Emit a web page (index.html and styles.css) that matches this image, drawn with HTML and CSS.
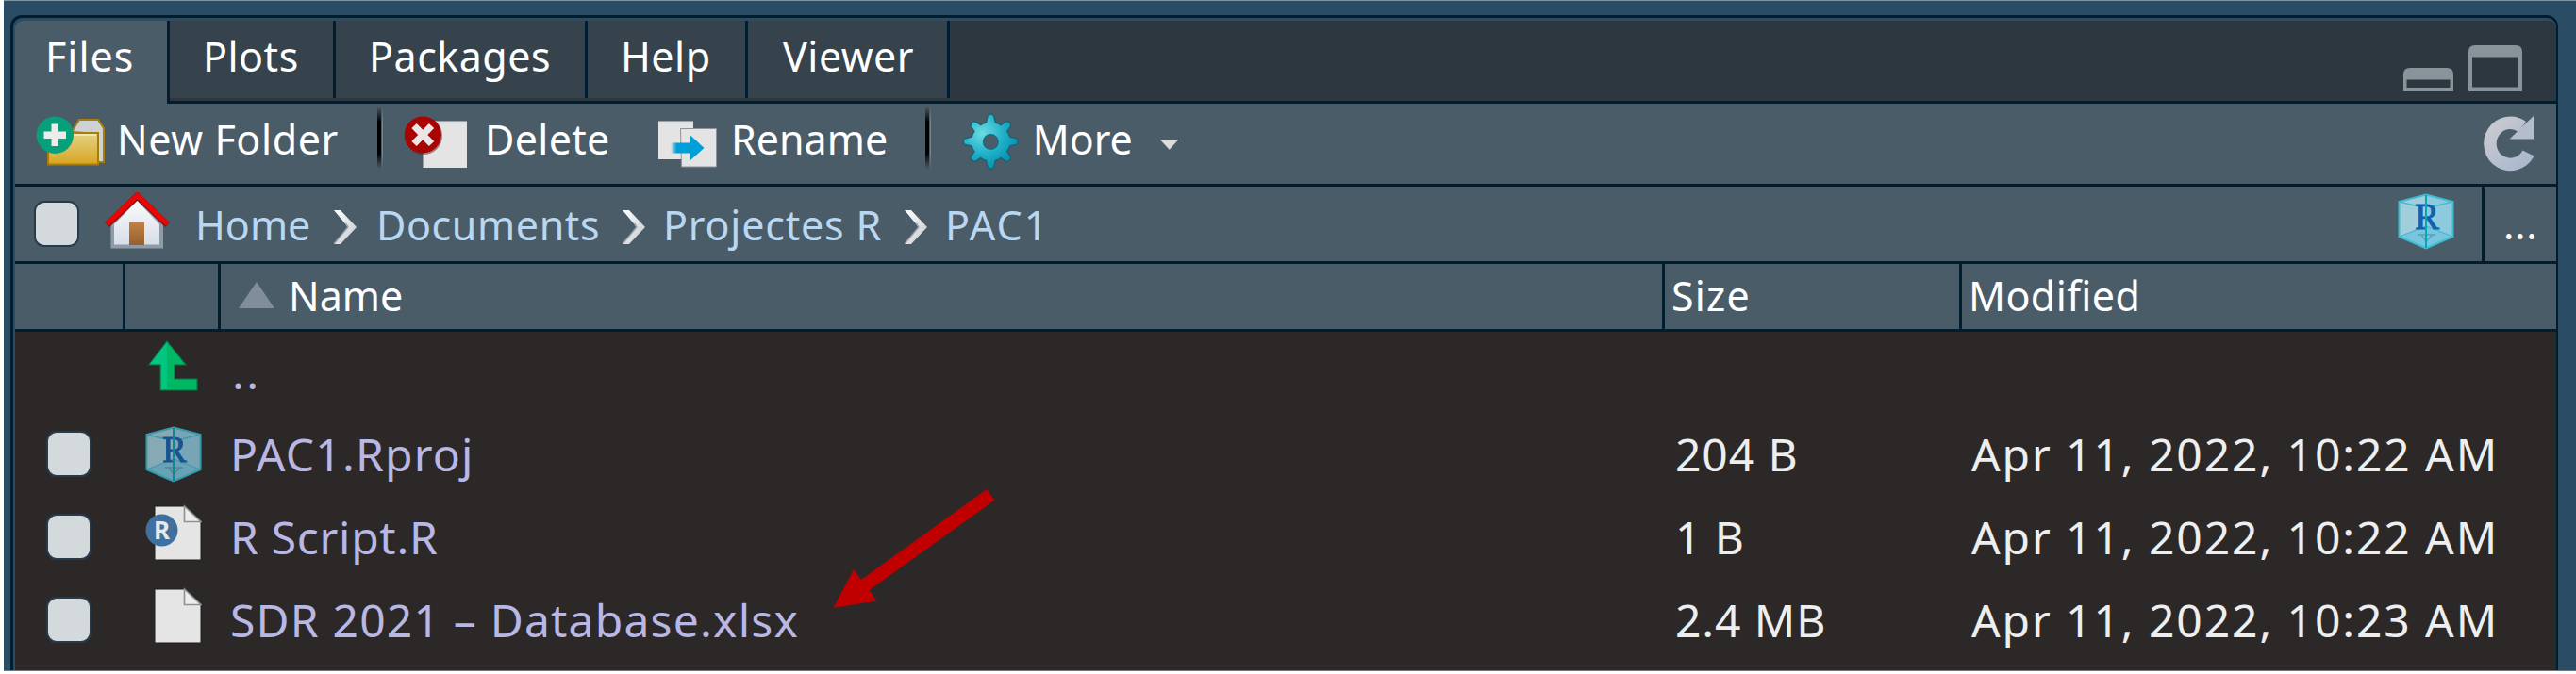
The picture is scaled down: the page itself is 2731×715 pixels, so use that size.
FILE: index.html
```
<!DOCTYPE html>
<html lang="en">
<head>
<meta charset="utf-8">
<title>Files</title>
<link rel="stylesheet" href="styles.css">
</head>
<body>
<svg class="defs" width="0" height="0">
  <defs>
    <linearGradient id="gold" x1="0" y1="0" x2="0" y2="1"><stop offset="0" stop-color="#e2d386"/><stop offset="1" stop-color="#d9a520"/></linearGradient>
    <radialGradient id="teal" cx=".35" cy=".35" r=".65"><stop offset="0" stop-color="#6cdbe2"/><stop offset=".6" stop-color="#1fafc8"/><stop offset="1" stop-color="#0893b5"/></radialGradient>
    <linearGradient id="wall" x1="0" y1="0" x2="0" y2="1"><stop offset="0" stop-color="#fafafa"/><stop offset="1" stop-color="#d8dde8"/></linearGradient>
    <linearGradient id="door" x1="0" y1="0" x2="0" y2="1"><stop offset="0" stop-color="#c18148"/><stop offset="1" stop-color="#94602f"/></linearGradient>
    <linearGradient id="silver" x1="0" y1="0" x2="1" y2="1"><stop offset="0" stop-color="#c9cacf"/><stop offset="1" stop-color="#a9b8cd"/></linearGradient>
    <linearGradient id="chev" x1="0" y1="0" x2="1" y2="1"><stop offset="0" stop-color="#ffffff"/><stop offset="1" stop-color="#c4c8cd"/></linearGradient>
    <linearGradient id="shaft" x1="0" y1="0" x2="1" y2="0"><stop offset="0" stop-color="#009fd8" stop-opacity="0"/><stop offset=".3" stop-color="#009fd8"/></linearGradient>
    <symbol id="chevron" viewBox="0 0 24 36"><path d="M0 0H7L24 18 7 36H0L15 18Z" fill="url(#chev)"/><path d="M0 36L15 18 12.500 14" fill="none" stroke="#9ea6ae" stroke-width="1.500"/></symbol>
    <symbol id="cube" viewBox="0 0 60 60">
      <path d="M30 1.500L58.500 9V46L30 58.500 1.500 46V9Z" fill="#8dc9df"/>
      <path d="M30 1.500V38L1.500 46V9Z" fill="#a0cedb"/>
      <path d="M1.500 46L30 35 58.500 46 30 58.500Z" fill="#78c5df"/>
      <path d="M30 1.500L58.500 9V46L30 58.500 1.500 46V9Z" fill="none" stroke="#3cbdd2" stroke-width="2"/>
      <path d="M1.500 46L30 35 58.500 46M1.500 9L22 14M58.500 9L38 14" fill="none" stroke="#43bccd" stroke-width="1.300"/>
      <path d="M21 44H40M25 44L30 51M30 51L37 44" fill="none" stroke="#5aa3b8" stroke-width="1.500"/>
      <text x="31" y="37.500" text-anchor="middle" class="cube-letter">R</text>
      <path d="M30 2V58" stroke="#00a7b4" stroke-width="2"/>
    </symbol>
    <symbol id="page" viewBox="0 0 60 60">
      <path d="M10 2H42L59 19V59H10Z" fill="#e5e5e5" stroke="#1f1d1d" stroke-width="1"/>
      <path d="M41.500 2V18.500H59Z" fill="#ececec" stroke="#8e9292" stroke-width="1.600"/>
    </symbol>
  </defs>
</svg>
<div class="frame">
  <div class="panel">
    <div class="tabbar">
      <div class="tab active t-files">Files</div>
      <div class="tab t-plots">Plots</div>
      <div class="tab t-packages">Packages</div>
      <div class="tab t-help">Help</div>
      <div class="tab t-viewer">Viewer</div>
      <svg class="winctl" width="130" height="52" viewBox="2547 47 130 52">
        <path d="M2549 97V79Q2549 72 2556 72H2595Q2602 72 2602 79V97ZM2552.500 84.500V93H2598.500V84.500Z" fill="#87949a" fill-rule="evenodd"/>
        <path d="M2618 97V55Q2618 48 2625 48H2668Q2675 48 2675 55V97ZM2622 60.500V92.500H2670.500V60.500Z" fill="#87949a" fill-rule="evenodd"/>
      </svg>
    </div>
    <div class="toolbar">
      <div class="tool b-new">
        <svg width="80" height="85" viewBox="36 110 80 85">
          <path d="M76 140L84 127H104L110 136V172H104V142Z" fill="#cfd2d2" stroke="#a87c0d" stroke-width="2"/>
          <path d="M51 141H104V174.500H51Z" fill="url(#gold)" stroke="#a87c0d" stroke-width="2"/>
          <path d="M54 143H102" stroke="#f3edc6" stroke-width="1.500"/>
          <circle cx="58.300" cy="143.300" r="19.700" fill="#07a07a"/>
          <path d="M54.500 131.500h7.500v8h8v7.500h-8v8h-7.500v-8h-8v-7.500h8Z" fill="#ececec"/>
        </svg>
        <span>New Folder</span>
      </div>
      <div class="divider"></div>
      <div class="tool b-delete">
        <svg width="80" height="85" viewBox="420 110 80 85">
          <path d="M448.500 128.500H495V178H448.500Z" fill="#e4e4e4"/>
          <circle cx="449" cy="144" r="20" fill="#5b2020" opacity=".5"/>
          <circle cx="448.300" cy="143" r="19.600" fill="#a90404"/>
          <path d="M439 133.500L457.500 152.500M457.500 133.500L439 152.500" stroke="#ebe5e5" stroke-width="7.500"/>
        </svg>
        <span>Delete</span>
      </div>
      <div class="tool b-rename">
        <svg width="80" height="85" viewBox="690 110 80 85">
          <path d="M698 128.500H735V169H698Z" fill="#e4e4e4"/>
          <path d="M721.500 136.500H759.500V177H722.500Z" fill="#e4e4e4" stroke="#8d9398" stroke-width="1"/>
          <path d="M711 151.500H732V162.500H711Z" fill="url(#shaft)"/>
          <path d="M732 143.500L746.500 157 732 170Z" fill="#009fd8"/>
        </svg>
        <span>Rename</span>
      </div>
      <div class="divider d2"></div>
      <div class="tool b-more">
        <svg width="80" height="85" viewBox="1011 110 80 85">
          <g transform="translate(1050.500 150)">
            <path d="M-5 -21L-3.500 -28Q0 -32 3.500 -28L5 -21Q8 -20.500 11 -18L17 -22Q22 -22 22 -17L18 -11Q20 -8 21 -5L28 -3.500Q32 0 28 3.500L21 5Q20 8 18 11L22 17Q22 22 17 22L11 18Q8 20.500 5 21L3.500 28Q0 32 -3.500 28L-5 21Q-8 20.500 -11 18L-17 22Q-22 22 -22 17L-18 11Q-20 8 -21 5L-28 3.500Q-32 0 -28 -3.500L-21 -5Q-20 -8 -18 -11L-22 -17Q-22 -22 -17 -22L-11 -18Q-8 -20.500 -5 -21Z" fill="url(#teal)" stroke="#23606f" stroke-width="1.500"/>
            <circle r="8" cy=".5" fill="#4b5b68" stroke="#176c80" stroke-width="1.500"/>
          </g>
        </svg>
        <span>More</span>
        <svg class="caret" width="20" height="11" viewBox="0 0 20 11"><path d="M0 0H20L10 11Z" fill="#dcdcdc"/></svg>
      </div>
      <svg class="refresh" width="60" height="85" viewBox="2630 110 60 85">
        <path d="M2681.500 162.500A21.500 22 0 1 1 2675 134.500" fill="none" stroke="url(#silver)" stroke-width="13.500"/>
        <path d="M2687 123V147.500H2661.500Z" fill="#b4bdcb"/>
      </svg>
    </div>
    <div class="crumbs">
      <span class="check c-all"></span>
      <svg class="house" width="70" height="62" viewBox="0 0 70 62">
        <path d="M6.500 34L34.500 8 62 34V59.500H6.500Z" fill="#8e9ca8"/>
        <path d="M10 34L34.500 9 58 34V55.500H10Z" fill="url(#wall)"/>
        <path d="M26 31.500H42V56H26Z" fill="url(#door)"/>
        <path d="M2.500 34.500L34.500 4 66.500 34.500" fill="none" stroke="#7d1515" stroke-width="7"/>
        <path d="M2.500 33.500L34.500 3.500 66.500 33.500" fill="none" stroke="#eb0505" stroke-width="5.500"/>
      </svg>
      <span class="crumb k-home">Home</span>
      <svg class="chevron" width="24" height="36"><use href="#chevron"/></svg>
      <span class="crumb k-docs">Documents</span>
      <svg class="chevron" width="24" height="36"><use href="#chevron"/></svg>
      <span class="crumb k-proj">Projectes R</span>
      <svg class="chevron" width="24" height="36"><use href="#chevron"/></svg>
      <span class="crumb k-pac">PAC1</span>
      <svg class="project" width="60" height="60"><use href="#cube"/></svg>
      <div class="browse">...</div>
    </div>
    <div class="grid head">
      <div class="hcell"></div>
      <div class="hcell"></div>
      <div class="hcell h-name"><svg width="38" height="28" viewBox="0 0 38 28"><path d="M19 0L38 28H0Z" fill="#828d9b"/></svg><span>Name</span></div>
      <div class="hcell h-size">Size</div>
      <div class="hcell h-mod">Modified</div>
    </div>
    <div class="rows">
      <div class="grid row">
        <div></div>
        <div class="icon"><svg class="up" width="60" height="60" viewBox="155 359 60 60">
          <path d="M178 362L198 387H186V402H210V414H171V387H159Z" fill="#00b864" stroke="#087443" stroke-width="1.200"/>
          <path d="M178 363V413H172V386H160Z" fill="#00c681"/>
        </svg></div>
        <div class="name n-up">..</div><div></div><div></div>
      </div>
      <div class="grid row">
        <div><span class="check"></span></div>
        <div class="icon"><svg class="dim" width="60" height="60"><use href="#cube"/></svg></div>
        <div class="name">PAC1.Rproj</div><div class="size">204 B</div><div class="date">Apr 11, 2022, 10:22 AM</div>
      </div>
      <div class="grid row">
        <div><span class="check"></span></div>
        <div class="icon file"><svg width="60" height="60" viewBox="0 0 60 60"><use href="#page"/><ellipse cx="17.500" cy="27.500" rx="17" ry="17" fill="#40709f"/><text x="17.500" y="37" text-anchor="middle" class="script-letter">R</text></svg></div>
        <div class="name n-script">R Script.R</div><div class="size s-one">1 B</div><div class="date">Apr 11, 2022, 10:22 AM</div>
      </div>
      <div class="grid row">
        <div><span class="check"></span></div>
        <div class="icon file"><svg width="60" height="60"><use href="#page"/></svg></div>
        <div class="name">SDR 2021 – Database.xlsx</div><div class="size">2.4 MB</div><div class="date">Apr 11, 2022, 10:23 AM</div>
      </div>
    </div>
  </div>
  <svg class="pointer" width="180" height="135" viewBox="880 515 180 135"><path d="M1046 519L1054.500 530.500 921.700 626 929.300 637.500 883.500 645 905 604 913 615Z" fill="#c00000"/></svg>
</div>
</body>
</html>
```
FILE: styles.css
```
* { box-sizing: border-box; }
body {
  margin: 0;
  background: #fff;
  font-family: "Noto Sans", "Open Sans", sans-serif;
  font-size: 43px;
  color: #fff;
  white-space: nowrap;
  overflow: hidden;
}
.defs { position: absolute; }
.frame {
  position: relative;
  height: 712px;
  margin-left: 4px;
  padding: 15px 0 0 7px;
  background: #2a4c64;
  border-top: 1px solid #8096a3;
  border-bottom: 1px solid #777;
  overflow: hidden;
}
.panel {
  width: 2701px;
  height: 706px;
  padding: 3px 0 0 2px;
  border: 3px solid #001e30;
  border-right-width: 2px;
  border-radius: 12px 12px 0 0;
  overflow: hidden;
}
.tabbar {
  display: flex;
  height: 88px;
  background: #2c3740;
  border-bottom: 3px solid #001e30;
  border-radius: 8px 8px 0 0;
}
.tab {
  height: 82px;
  line-height: 76px;
  letter-spacing: .5px;
  background: #37434c;
  border-right: 3px solid #001e30;
}
.tab.active { height: 88px; background: #4b5c69; border-top-left-radius: 8px; }
.t-files { width: 164px; padding-left: 32px; letter-spacing: 1px; }
.t-plots { width: 176px; padding-left: 35px; }
.t-packages { width: 267px; padding-left: 35px; }
.t-help { width: 170px; padding-left: 35px; }
.t-viewer { width: 214px; padding-left: 37px; }
.winctl { margin: 25px 34px 0 auto; }
.toolbar {
  display: flex;
  height: 88px;
  background: #4b5c69;
  border-bottom: 3px solid #001e30;
  line-height: 75px;
}
.tool { display: flex; flex: none; }
.tool span { margin-left: 7px; }
.b-new { width: 384px; padding-left: 20px; }
.b-new span { margin-left: 8px; letter-spacing: .6px; }
.b-delete { width: 284px; padding-left: 14px; }
.b-delete span { margin-left: 14px; letter-spacing: .3px; }
.b-rename { width: 291px; }
.b-rename span { margin-left: 5px; }
.b-more { width: 262px; padding-left: 25px; }
.b-more span { width: 139px; margin-left: 5px; }
.caret { margin-top: 38px; }
.divider {
  flex: none;
  width: 6px;
  height: 66px;
  margin-top: 3px;
  background: linear-gradient(90deg, #000 0 4px, #4b5c69 4px 5px, #788690 5px);
  mask-image: linear-gradient(transparent, #000 25% 75%, transparent);
}
.refresh { margin: 0 21px 0 auto; }
.crumbs {
  display: flex;
  align-items: center;
  height: 82px;
  line-height: 80px;
  background: #4b5c69;
  border-bottom: 3px solid #001e30;
  color: #b9d7f0;
}
.crumb { margin-top: 2px; }
.check {
  display: block;
  width: 48px;
  height: 49px;
  background: #d4d9dc;
  border: 2px solid #263c4e;
  border-radius: 11px;
}
.c-all { margin-left: 20px; }
.house { margin-left: 27px; margin-top: -6px; }
.k-home { width: 149px; margin-left: 26px; }
.k-docs { width: 263px; margin-left: 19px; letter-spacing: .6px; }
.k-proj { width: 258px; margin-left: 17px; letter-spacing: .8px; }
.k-pac { margin-left: 17px; letter-spacing: 2px; }
.chevron { margin-top: 6px; margin-left: -2px; margin-right: 2px; }
.project { margin: -5px 29px 0 auto; }
.browse {
  align-self: stretch;
  width: 79px;
  padding-left: 20px;
  border-left: 3px solid #001e30;
  color: #fff;
  letter-spacing: .6px;
}
.grid {
  display: grid;
  grid-template-columns: 117px 101px 1531px 315px 1fr;
}
.head {
  height: 72px;
  line-height: 68px;
  background: #4b5c69;
  border-bottom: 3px solid #001e30;
}
.hcell { padding-left: 7px; border-right: 3px solid #001e30; }
.hcell:last-child { border-right: 0; }
.h-name { display: flex; padding-left: 19px; }
.h-name svg { margin-top: 19px; }
.h-name span { margin-left: 15px; }
.h-size { letter-spacing: 1.2px; }
.h-mod { letter-spacing: .4px; }
.rows { height: 365px; background: #2d2828; }
.row {
  height: 88px;
  line-height: 88px;
  align-items: center;
  font-size: 48px;
  color: #eee;
}
.row:first-child { height: 86px; line-height: 84px; }
.row .check { margin: -2px 0 0 33px; }
.icon { height: 60px; padding-left: 21px; line-height: 0; }
.icon.file { margin-top: -11px; }
.up { margin-top: -6px; }
.dim { opacity: .78; }
.name { padding-left: 10px; color: #b9b7e3; letter-spacing: 1.2px; }
.n-up { padding-left: 12px; letter-spacing: 2.500px; }
.n-script { letter-spacing: .7px; }
.size { padding-left: 11px; letter-spacing: .9px; }
.date { padding-left: 10px; letter-spacing: 1.900px; }
.cube-letter { font: 39px "Liberation Serif", serif; fill: #1260ae; stroke: #1260ae; stroke-width: .8; }
.script-letter { font: bold 26px "Noto Sans", sans-serif; fill: #e8e8e8; }
.pointer { position: absolute; left: 876px; top: 514px; }
```
